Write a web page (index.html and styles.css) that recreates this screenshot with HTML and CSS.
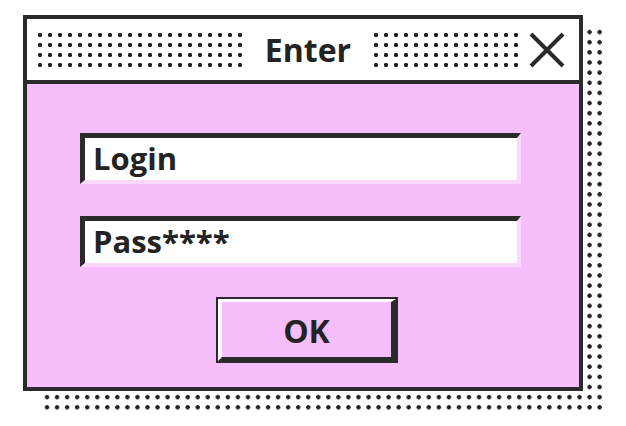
FILE: index.html
```html
<!DOCTYPE html>
<html lang="en">
<head>
    <meta charset="UTF-8">
    <meta name="viewport" content="width=device-width, initial-scale=1.0">
    <title>Enter</title>
    <link rel="stylesheet" href="styles.css">
</head>
<body>
    <div class="stage">
        <div class="dot-shadow"></div>

        <div class="window">
            <div class="titlebar">
                <div class="dots dots-left"></div>
                <div class="title">Enter</div>
                <div class="dots dots-right"></div>
                <button class="close-btn" aria-label="Close">
                    <svg width="36" height="36" viewBox="0 0 36 36">
                        <path d="M2 2 L34 34 M34 2 L2 34" stroke="#2b2b2b" stroke-width="4" fill="none"/>
                    </svg>
                </button>
            </div>

            <div class="content">
                <div class="field">Login</div>
                <div class="field">Pass****</div>
                <button class="ok-btn"><span class="ok-face">OK</span></button>
            </div>
        </div>
    </div>
</body>
</html>
```

FILE: styles.css
```css
* {
    box-sizing: border-box;
}

body {
    margin: 0;
    background: #fff;
    font-family: 'Open Sans', 'Noto Sans', sans-serif;
    color: #232323;
}

.stage {
    position: relative;
    width: 626px;
    height: 426px;
    padding: 15px 0 0 23px;
}

/* dotted drop shadow, sits under the window */
.dot-shadow {
    position: absolute;
    left: 42px;
    top: 27px;
    width: 563px;
    height: 385px;
    background-image: radial-gradient(circle, #222 1.9px, transparent 2.4px);
    background-size: 10.06px 10.15px;
}

.window {
    position: relative;
    width: 560px;
    height: 376px;
    border: 4px solid #2b2b2b;
    background: #fff;
    display: flex;
    flex-direction: column;
}

.titlebar {
    height: 65px;
    border-bottom: 4px solid #2b2b2b;
    display: flex;
    align-items: center;
    padding: 0 14px 0 8px;
}

.dots {
    height: 40px;
    background-image: radial-gradient(circle, #222 1.9px, transparent 2.4px);
    background-size: 10px 10px;
}

.dots-left {
    width: 210px;
}

.dots-right {
    width: 150px;
    margin-right: 8px;
}

.title {
    flex: 1;
    text-align: center;
    font-size: 32px;
    font-weight: 700;
    line-height: 40px;
}

.close-btn {
    width: 36px;
    height: 36px;
    padding: 0;
    border: none;
    background: none;
    cursor: pointer;
}

    .close-btn svg {
        display: block;
    }

.content {
    flex: 1;
    background: #f6bffb;
    padding: 49px 0 0 53px;
}

.field {
    width: 441px;
    height: 51px;
    margin-bottom: 32px;
    padding-left: 8px;
    background: #fff;
    border-style: solid;
    border-width: 5px 4px 4px 5px;
    border-color: #2b2b2b #fbd9fc #fbd9fc #2b2b2b;
    font-size: 31px;
    font-weight: 700;
    line-height: 40px;
}

    .field + .field {
        margin-bottom: 30px;
    }

.ok-btn {
    display: block;
    margin-left: 136px;
    width: 182px;
    height: 66px;
    padding: 0;
    border: 2px solid #2b2b2b;
    background: #f6bffb;
    font-family: inherit;
    cursor: pointer;
}

.ok-face {
    display: flex;
    align-items: center;
    justify-content: center;
    height: 100%;
    padding-top: 3px;
    border-style: solid;
    border-width: 3px 5px 4px 4px;
    border-color: #fff #2b2b2b #2b2b2b #fff;
    font-size: 32px;
    font-weight: 700;
    color: #232323;
    line-height: 1;
}
```
